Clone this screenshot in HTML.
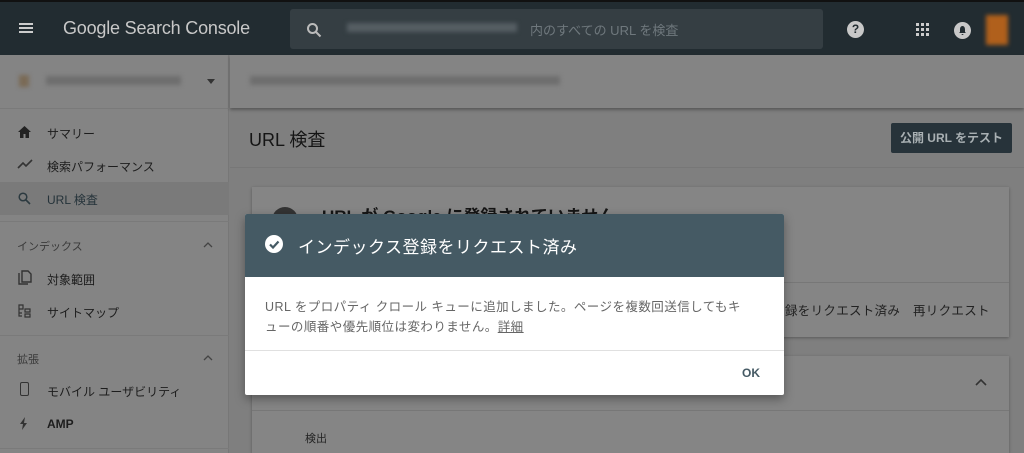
<!DOCTYPE html>
<html><head><meta charset="utf-8"><style>
*{margin:0;padding:0;box-sizing:border-box}
body{width:1024px;height:453px;overflow:hidden;background:#7f7f7f;font-family:"Liberation Sans","Noto Sans CJK JP",sans-serif;position:relative;color:#1a1a1a}
.hdr{position:absolute;left:0;top:0;width:1024px;height:55px;background:#222c31;border-top:2px solid #111}
.abs{position:absolute}
.side{position:absolute;left:0;top:55px;width:229px;height:398px;background:#848484;border-right:1px solid #777}
.item{position:absolute;left:47px;font-size:12px;color:#1d1d1d}
.sec{position:absolute;left:17px;font-size:11px;color:#3a3a3a}
.blur{background:#6e6e6e;filter:blur(2px);position:absolute}
.chev{position:absolute}
</style></head><body>
<div class="hdr">
 <div class="abs" style="left:19px;top:21px;width:14px;height:2px;background:#ccc;box-shadow:0 4px 0 #ccc,0 8px 0 #ccc"></div>
 <div class="abs" style="left:63px;top:16px;font-size:18px;color:#c8c8c8;letter-spacing:-0.2px">Google Search Console</div>
 <div class="abs" style="left:290px;top:7px;width:533px;height:40px;background:#353e43;border-radius:3px"></div>
 <svg class="abs" style="left:306px;top:20px" width="16" height="16" viewBox="0 0 16 16"><circle cx="6.5" cy="6.5" r="4.5" stroke="#bbb" stroke-width="2" fill="none"/><path d="M10 10l4.5 4.5" stroke="#bbb" stroke-width="2"/></svg>
 <div class="blur" style="left:347px;top:21px;width:170px;height:9px;background:#555e63"></div>
 <div class="abs" style="left:530px;top:18px;font-size:13px;color:#6f787d">内のすべての URL を検査</div>
 <div class="abs" style="left:847px;top:19px;width:17px;height:17px;border-radius:50%;background:#c8c8c8;color:#222c31;font-size:12px;font-weight:bold;text-align:center;line-height:17px">?</div>
 <div class="abs" style="left:916px;top:21px;width:3px;height:3px;background:#ccc;box-shadow:5px 0 #ccc,10px 0 #ccc,0 5px #ccc,5px 5px #ccc,10px 5px #ccc,0 10px #ccc,5px 10px #ccc,10px 10px #ccc"></div>
 <div class="abs" style="left:954px;top:20px;width:17px;height:17px;border-radius:50%;background:#c8c8c8"></div>
 <svg class="abs" style="left:957px;top:23px" width="11" height="11"><path d="M5.5 1C3.5 1 3 3 3 4.5V7L2 8h7L8 7V4.5C8 3 7.5 1 5.5 1zM4.5 9h2a1 1 0 0 1-2 0z" fill="#222c31"/></svg>
 <div class="abs" style="left:986px;top:13px;width:22px;height:30px;background:#b0601c;filter:blur(2px)"></div>
</div>
<div class="side">
 <div class="blur" style="left:19px;top:20px;width:10px;height:12px;background:#7a6a55"></div>
 <div class="blur" style="left:46px;top:21px;width:135px;height:9px"></div>
 <div class="abs" style="left:207px;top:24px;border:4px solid transparent;border-top:5px solid #333"></div>
 <div class="abs" style="left:0;top:53px;width:229px;height:1px;background:#7a7a7a"></div>
 <svg class="abs" style="left:18px;top:71px" width="13" height="12"><path d="M6.5 0L0 6h2v6h3.5V8h2v4H11V6h2z" fill="#222"/></svg>
 <div class="item" style="top:70px">サマリー</div>
 <svg class="abs" style="left:17px;top:104px" width="16" height="10"><path d="M1 9l5-5 3 3 6-6" stroke="#333" stroke-width="1.6" fill="none"/></svg>
 <div class="item" style="top:103px">検索パフォーマンス</div>
 <div class="abs" style="left:0;top:127px;width:229px;height:33px;background:#7a7a7a"></div>
 <svg class="abs" style="left:18px;top:137px" width="13" height="13"><circle cx="5" cy="5" r="3.8" stroke="#2c3a40" stroke-width="1.5" fill="none"/><path d="M8 8l4 4" stroke="#2c3a40" stroke-width="1.6"/></svg>
 <div class="item" style="top:136px;color:#25333a">URL 検査</div>
 <div class="abs" style="left:0;top:166px;width:229px;height:1px;background:#7a7a7a"></div>
 <div class="sec" style="top:183px">インデックス</div>
 <svg class="chev" style="left:203px;top:187px" width="10" height="6"><path d="M1 5l4-4 4 4" stroke="#444" stroke-width="1.3" fill="none"/></svg>
 <svg class="abs" style="left:18px;top:215px" width="14" height="15"><path d="M1 3v11h9M4 1h6l3 3v8H4z" stroke="#333" stroke-width="1.4" fill="none"/></svg>
 <div class="item" style="top:216px">対象範囲</div>
 <svg class="abs" style="left:18px;top:249px" width="13" height="14"><path d="M1 1h4v4H1zM1 5v7h3M1 9h3M7 5h5v3H7zM7 10h5v3H7z" stroke="#333" stroke-width="1.2" fill="none"/></svg>
 <div class="item" style="top:249px">サイトマップ</div>
 <div class="abs" style="left:0;top:280px;width:229px;height:1px;background:#7a7a7a"></div>
 <div class="sec" style="top:296px">拡張</div>
 <svg class="chev" style="left:203px;top:300px" width="10" height="6"><path d="M1 5l4-4 4 4" stroke="#444" stroke-width="1.3" fill="none"/></svg>
 <div class="abs" style="left:20px;top:327px;width:9px;height:14px;border:1.5px solid #333;border-radius:2px"></div>
 <div class="item" style="top:328px">モバイル ユーザビリティ</div>
 <svg class="abs" style="left:20px;top:362px" width="8" height="13"><path d="M5 0L0 7h3l-1 6 5-7H4z" fill="#333"/></svg>
 <div class="item" style="top:362px;font-weight:bold">AMP</div>
 <div class="abs" style="left:0;top:393px;width:229px;height:1px;background:#7a7a7a"></div>
</div>
<div class="abs" style="left:230px;top:55px;width:794px;height:53px;background:#848484;box-shadow:0 2px 3px rgba(0,0,0,.3)"></div>
<div class="blur" style="left:250px;top:76px;width:310px;height:9px"></div>
<div class="abs" style="left:249px;top:126px;font-size:18px;color:#151515">URL 検査</div>
<div class="abs" style="left:230px;top:167px;width:794px;height:1px;background:#777"></div>
<div class="abs" style="left:891px;top:123px;width:121px;height:30px;background:#27333a;border-radius:2px;color:#a9b0b3;font-size:12px;line-height:30px;text-align:center;font-weight:bold">公開 URL をテスト</div>
<div class="abs" style="left:252px;top:187px;width:757px;height:150px;background:#858585;box-shadow:0 1px 3px rgba(0,0,0,.3)"></div>
<div class="abs" style="left:272px;top:207px;width:26px;height:26px;border-radius:50%;background:#333"></div>
<div class="abs" style="left:322px;top:202px;font-size:17px;font-weight:bold;color:#151515">URL が Google に登録されていません</div>
<div class="abs" style="left:252px;top:282px;width:757px;height:1px;background:#777"></div>
<div class="abs" style="left:785px;top:300px;font-size:12.5px;color:#222;letter-spacing:0.3px">録をリクエスト済み　再リクエスト</div>
<div class="abs" style="left:252px;top:356px;width:757px;height:97px;background:#858585;box-shadow:0 1px 3px rgba(0,0,0,.3)"></div>
<svg class="chev" style="left:975px;top:379px" width="12" height="7"><path d="M1 6l5-5 5 5" stroke="#333" stroke-width="1.6" fill="none"/></svg>
<div class="abs" style="left:252px;top:410px;width:757px;height:1px;background:#777"></div>
<div class="abs" style="left:305px;top:430px;font-size:11px;color:#222">検出</div>
<div class="abs" style="left:245px;top:214px;width:539px;height:181px;background:#fff;box-shadow:0 4px 10px rgba(0,0,0,.35);border-radius:2px;overflow:hidden">
 <div style="height:63px;background:#455a64;position:relative">
  <div class="abs" style="left:20px;top:21px;width:18px;height:18px;border-radius:50%;background:#fff"></div>
  <svg class="abs" style="left:20px;top:21px" width="18" height="18"><path d="M5 9.5l3 3 5.5-6" stroke="#455a64" stroke-width="2.2" fill="none"/></svg>
  <div class="abs" style="left:53px;top:19px;font-size:17px;color:#fff;letter-spacing:0.5px">インデックス登録をリクエスト済み</div>
 </div>
 <div style="padding:20px 10px 0 20px;height:74px;font-size:12.5px;line-height:20px;color:#666;border-bottom:1px solid #e0e0e0;letter-spacing:0.45px;white-space:nowrap">URL をプロパティ クロール キューに追加しました。ページを複数回送信してもキ<br>ューの順番や優先順位は変わりません。<span style="text-decoration:underline">詳細</span></div>
 <div class="abs" style="left:497px;top:152px;font-size:12px;font-weight:bold;color:#455a64">OK</div>
</div>
</body></html>
